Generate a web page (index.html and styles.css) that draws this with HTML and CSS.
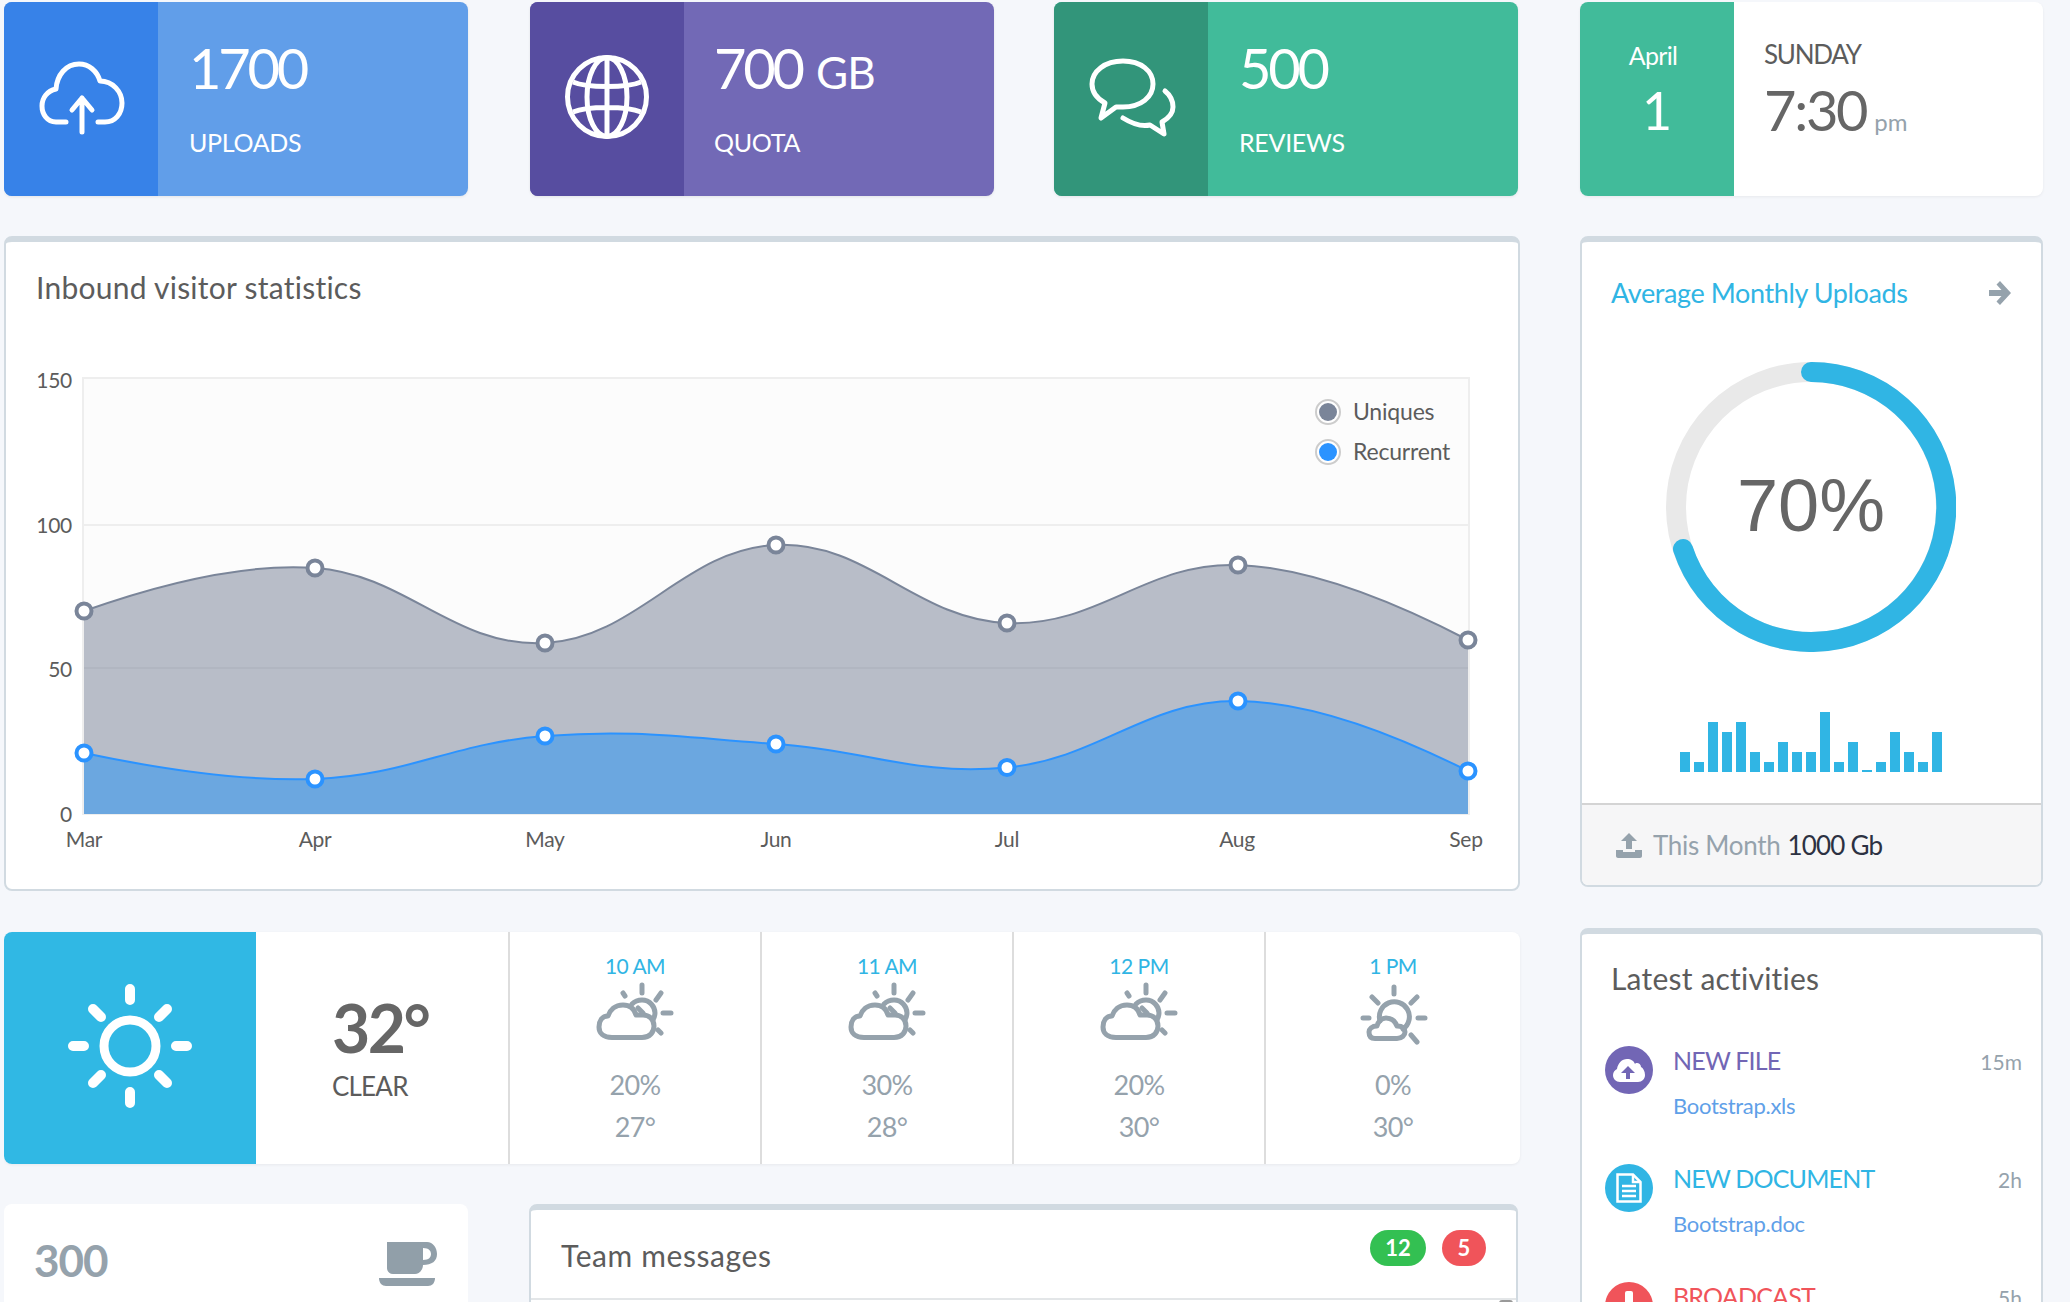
FILE: index.html
```html
<!DOCTYPE html>
<html lang="en">
<head>
  <meta charset="UTF-8">
  <title>Dashboard</title>
  <link rel="stylesheet" href="styles.css">
</head>
<body>
  <!-- shared weather icons -->
  <svg class="defs" width="0" height="0">
    <symbol id="partlyCloudy" viewBox="0 0 90 66">
      <g fill="none" stroke="currentColor" stroke-width="5" stroke-linecap="round" stroke-linejoin="round">
        <path d="M22 57.5H52C60 57.5 64 52 64 46C64 39 59 35 53 35H46C44 28 39 25 33 25C25 25 20 30 18 36C12 36 9 41 9 47C9 53 13 57.5 22 57.5Z"/>
        <path d="M42 24C45 21 48 20 52 20C60 20 65 27 65 33C65 36 64 38 63 40"/>
        <path d="M48 28L53 33M52 5V13M71 13L66 20M73 33H81M68 50L71 53M33 13L35 16"/>
      </g>
    </symbol>
    <symbol id="mostlySunny" viewBox="-3 0 90 66">
      <g fill="none" stroke="currentColor" stroke-width="5" stroke-linecap="round" stroke-linejoin="round">
        <path d="M24 58.5H46C51 58.5 54 55 54 52C54 48 51 46 46 46C44 41 40 38 35 38C30 38 27 42 26 46C21 46 18 49 18 52C18 56 20 58.5 24 58.5Z"/>
        <path d="M29 41A15 15 0 1 1 52 49"/>
        <path d="M43 7V14M66 17L60 23M67 38H74M60 55L66 62M21 17L27 23M12 38H18"/>
      </g>
    </symbol>
  </svg>

  <div class="dash">
    <div class="main-col">
      <!-- Stat cards -->
      <div class="stat-row">
        <div class="stat stat-blue">
          <div class="stat-icon">
            <svg width="100" height="96" viewBox="0 0 100 96" fill="none" stroke="#fff" stroke-width="5" stroke-linecap="round" stroke-linejoin="round">
              <path d="M35 71H25C16 71 11 63 11 55C11 47 16 40 25 38C26 24 35 13 48 13C58 13 66 20 69 30C82 30 91 41 91 52C91 63 84 71 74 71H67"/>
              <path d="M51 47V81M41 59L51 47L61 59"/>
            </svg>
          </div>
          <div class="stat-body">
            <div class="stat-num">1700</div>
            <div class="stat-label">UPLOADS</div>
          </div>
        </div>
        <div class="stat stat-purple">
          <div class="stat-icon">
            <svg class="globe" width="90" height="90" viewBox="0 0 90 90" fill="none" stroke="#fff" stroke-width="5">
              <circle cx="45" cy="45" r="39.5"/>
              <ellipse cx="45" cy="45" rx="20" ry="39.5"/>
              <path d="M45 5V85M11 30C25 36 65 36 79 30M11 60C25 54 65 54 79 60"/>
            </svg>
          </div>
          <div class="stat-body">
            <div class="stat-num">700 <span class="stat-unit">GB</span></div>
            <div class="stat-label">QUOTA</div>
          </div>
        </div>
        <div class="stat stat-green">
          <div class="stat-icon">
            <svg width="100" height="96" viewBox="0 0 100 96" fill="none" stroke="#fff" stroke-width="5" stroke-linecap="round" stroke-linejoin="round">
              <path d="M24 52C15 47 11 40 11 33C11 20 24 10 42 10C60 10 72 20 72 33C72 46 60 56 42 56H35L20 67Z"/>
              <path d="M84 40C89 44 92 50 92 56C92 62 88 67 81 71L83 83L69 74C60 76 50 72 42 67"/>
            </svg>
          </div>
          <div class="stat-body">
            <div class="stat-num">500</div>
            <div class="stat-label">REVIEWS</div>
          </div>
        </div>
      </div>

      <!-- Visitor chart -->
      <div class="panel chart-panel">
        <h2 class="panel-title chart-title">Inbound visitor statistics</h2>
        <svg class="chart" width="1512" height="540" viewBox="6 340 1512 540">
          <rect x="83" y="378" width="1386" height="436" fill="#fcfcfc"/>
          <path d="M83 378H1469V814H83ZM83 525H1469M83 668H1469" fill="none" stroke="#eeeeee" stroke-width="2"/>
          <path class="area-uniques" d="M84 611Q223 561.6 315 568C407 574.4 453 647.6 545 643C637 638.4 684 549 776 545C868 541 915 619 1007 623C1099 627 1146 561.6 1238 565Q1330 568.4 1468 640V814H84Z"/>
          <path class="area-recurrent" d="M84 753Q223 782.4 315 779C407 775.6 453 743 545 736C637 729 684 737.7 776 744C868 750.3 915 776.1 1007 767.5C1099 758.9 1146 700.3 1238 701Q1330 701.7 1468 771V814H84Z"/>
          <path class="line-uniques" d="M84 611Q223 561.6 315 568C407 574.4 453 647.6 545 643C637 638.4 684 549 776 545C868 541 915 619 1007 623C1099 627 1146 561.6 1238 565Q1330 568.4 1468 640"/>
          <path class="line-recurrent" d="M84 753Q223 782.4 315 779C407 775.6 453 743 545 736C637 729 684 737.7 776 744C868 750.3 915 776.1 1007 767.5C1099 758.9 1146 700.3 1238 701Q1330 701.7 1468 771"/>
          <g class="dots-uniques">
            <circle cx="84" cy="611" r="7.500"/><circle cx="315" cy="568" r="7.500"/><circle cx="545" cy="643" r="7.500"/><circle cx="776" cy="545" r="7.500"/><circle cx="1007" cy="623" r="7.500"/><circle cx="1238" cy="565" r="7.500"/><circle cx="1468" cy="640" r="7.500"/>
          </g>
          <g class="dots-recurrent">
            <circle cx="84" cy="753" r="7.500"/><circle cx="315" cy="779" r="7.500"/><circle cx="545" cy="736" r="7.500"/><circle cx="776" cy="744" r="7.500"/><circle cx="1007" cy="767.5" r="7.500"/><circle cx="1238" cy="701" r="7.500"/><circle cx="1468" cy="771" r="7.500"/>
          </g>
          <g class="axis axis-y">
            <text x="72" y="388">150</text><text x="72" y="533">100</text><text x="72" y="677">50</text><text x="72" y="822">0</text>
          </g>
          <g class="axis axis-x">
            <text x="84" y="847">Mar</text><text x="315" y="847">Apr</text><text x="545" y="847">May</text><text x="776" y="847">Jun</text><text x="1007" y="847">Jul</text><text x="1237" y="847">Aug</text><text x="1466" y="847">Sep</text>
          </g>
          <circle cx="1328" cy="412" r="12" fill="#fff" stroke="#cccccc" stroke-width="2"/>
          <circle cx="1328" cy="412" r="9" fill="#7a8599"/>
          <circle cx="1328" cy="452" r="12" fill="#fff" stroke="#cccccc" stroke-width="2"/>
          <circle cx="1328" cy="452" r="9" fill="#2b93ff"/>
          <text class="legend" x="1353" y="420">Uniques</text>
          <text class="legend" x="1353" y="460">Recurrent</text>
        </svg>
      </div>

      <!-- Weather strip -->
      <div class="weather">
        <div class="weather-sun">
          <svg class="sun" width="130" height="130" viewBox="-65 -65 130 130" fill="none" stroke="#fff" stroke-linecap="round">
            <circle r="26" stroke-width="9"/>
            <path stroke-width="10" d="M0 -57V-46M0 57V46M-57 0H-46M57 0H46M-37 -37L-29 -29M37 -37L29 -29M-37 37L-29 29M37 37L29 29"/>
          </svg>
        </div>
        <div class="weather-now">
          <div class="temp-big">32°</div>
          <div class="temp-word">CLEAR</div>
        </div>
        <div class="hour">
          <div class="hour-time">10 AM</div>
          <svg class="hour-icon"><use href="#partlyCloudy"/></svg>
          <div class="hour-val">20%</div>
          <div class="hour-val">27°</div>
        </div>
        <div class="hour">
          <div class="hour-time">11 AM</div>
          <svg class="hour-icon"><use href="#partlyCloudy"/></svg>
          <div class="hour-val">30%</div>
          <div class="hour-val">28°</div>
        </div>
        <div class="hour">
          <div class="hour-time">12 PM</div>
          <svg class="hour-icon"><use href="#partlyCloudy"/></svg>
          <div class="hour-val">20%</div>
          <div class="hour-val">30°</div>
        </div>
        <div class="hour">
          <div class="hour-time">1 PM</div>
          <svg class="hour-icon"><use href="#mostlySunny"/></svg>
          <div class="hour-val">0%</div>
          <div class="hour-val">30°</div>
        </div>
      </div>

      <!-- Bottom row -->
      <div class="bottom-row">
        <div class="small-card">
          <div class="small-num">300</div>
          <svg width="58" height="44" viewBox="0 0 58 44" fill="#919fa9">
            <path d="M8 0H48C54 0 58 6 58 12C58 19 53 23 44 23C44 28 40 32 36 32H14C10 32 8 29 8 26ZM44 6V18C50 18 52 15 52 12C52 9 50 6 44 6Z" fill-rule="evenodd"/>
            <path d="M0 36H56C56 41 53 44 49 44H7C3 44 0 41 0 36Z"/>
          </svg>
        </div>
        <div class="panel team-panel">
          <div class="team-head">
            <h2 class="panel-title team-title">Team messages</h2>
            <div class="badges">
              <span class="badge badge-green">12</span>
              <span class="badge badge-red">5</span>
            </div>
          </div>
          <div class="team-body"><div class="thumb"></div></div>
        </div>
      </div>
    </div>

    <div class="side-col">
      <!-- Date and time -->
      <div class="time-card">
        <div class="time-date">
          <div class="time-month">April</div>
          <div class="time-day">1</div>
        </div>
        <div class="time-body">
          <div class="time-week">SUNDAY</div>
          <div class="time-clock">
            <span>7:30</span>
            <span class="time-ampm">pm</span>
          </div>
        </div>
      </div>

      <!-- Uploads gauge -->
      <div class="panel gauge-panel">
        <div class="gauge-head">
          <span class="gauge-title">Average Monthly Uploads</span>
          <svg width="22" height="24" viewBox="0 0 22 24" fill="#95a2ac">
            <path d="M11 0L22 12L11 24L7.500 20.500L12.500 15H0V9H12.500L7.500 3.500Z"/>
          </svg>
        </div>
        <svg class="gauge" width="290" height="290" viewBox="0 0 290 290" fill="none">
          <circle cx="145" cy="145" r="135" stroke="#e9e9e9" stroke-width="20"/>
          <path d="M145 10A135 135 0 1 1 17 187" stroke="#30b5e4" stroke-width="20" stroke-linecap="round"/>
          <text class="gauge-text" x="145" y="169">70%</text>
        </svg>
        <div class="bars">
          <i style="height:20px"></i><i style="height:10px"></i><i style="height:50px"></i><i style="height:40px"></i><i style="height:50px"></i><i style="height:20px"></i><i style="height:10px"></i><i style="height:30px"></i><i style="height:20px"></i><i style="height:20px"></i><i style="height:60px"></i><i style="height:10px"></i><i style="height:30px"></i><i style="height:2px"></i><i style="height:10px"></i><i style="height:40px"></i><i style="height:20px"></i><i style="height:10px"></i><i style="height:40px"></i>
        </div>
        <div class="gauge-foot">
          <svg width="26" height="25" viewBox="0 0 26 25" fill="#95a2ac">
            <path d="M13 0L21 8H16V16H10V8H5ZM0 17H7V19H19V17H26V23C26 24 25 25 24 25H2C1 25 0 24 0 23Z"/>
          </svg>
          <span class="foot-label">This Month</span>
          <span class="foot-value">1000 Gb</span>
        </div>
      </div>

      <!-- Activity list -->
      <div class="panel activity-panel">
        <h2 class="panel-title activity-title">Latest activities</h2>
        <div class="activity">
          <div class="activity-icon bg-purple">
            <svg width="32" height="24" viewBox="0 0 32 24" fill="#fff">
              <path fill-rule="evenodd" d="M7 24C3 24 0 21 0 17C0 14 2 12 4 11C5 5 9 1 14 1C18 1 21 3 22 6C23 4 28 5 28 9C30 10 32 13 32 17C32 21 29 24 25 24ZM15 8L8 15H13V21H17V15H22Z"/>
            </svg>
          </div>
          <div class="activity-text">
            <div class="activity-name text-purple">NEW FILE</div>
            <div class="activity-file">Bootstrap.xls</div>
          </div>
          <div class="activity-time">15m</div>
        </div>
        <div class="activity">
          <div class="activity-icon bg-cyan">
            <svg width="26" height="30" viewBox="0 0 26 30" fill="none" stroke="#fff" stroke-width="2.500">
              <path d="M1.500 1.500H17L24.500 9V28.500H1.500Z"/>
              <path d="M17 1.500V9H24.500M6 13H20M6 18H20M6 23H20"/>
            </svg>
          </div>
          <div class="activity-text">
            <div class="activity-name text-cyan">NEW DOCUMENT</div>
            <div class="activity-file">Bootstrap.doc</div>
          </div>
          <div class="activity-time">2h</div>
        </div>
        <div class="activity">
          <div class="activity-icon bg-red">
            <svg width="8" height="30" viewBox="0 0 8 30" fill="#fff">
              <rect width="8" height="20" rx="2"/>
              <rect y="23" width="8" height="7" rx="2"/>
            </svg>
          </div>
          <div class="activity-text">
            <div class="activity-name text-red">BROADCAST</div>
          </div>
          <div class="activity-time">5h</div>
        </div>
      </div>
    </div>
  </div>
</body>
</html>
```

FILE: styles.css
```css
/* Global */
html, body {
  height: 1302px;
  overflow: hidden;
}
body {
  margin: 0;
  padding: 2px 0 0 4px;
  box-sizing: border-box;
  background: #f5f7fb;
  font-family: "Lato", "Open Sans", sans-serif;
  color: #5c5c5c;
}
.defs {
  display: block;
  height: 0;
}
.dash {
  display: flex;
  gap: 60px;
  align-items: flex-start;
  height: 1300px;
  overflow: hidden;
}
.main-col {
  width: 1516px;
}
.side-col {
  width: 463px;
}

/* Panels with the grey top edge */
.panel {
  background: #fff;
  box-sizing: border-box;
  border: 2px solid #d1dae1;
  border-top-width: 6px;
  border-radius: 8px;
}
.panel-title {
  margin: 0;
  font-size: 30px;
  line-height: 32px;
  font-weight: 400;
  color: #5c5c5c;
  letter-spacing: 0.250px;
}

/* Stat cards */
.stat-row {
  display: flex;
  gap: 61px;
}
.stat {
  width: 464px;
  height: 194px;
  display: flex;
  border-radius: 8px;
  overflow: hidden;
  color: #fff;
  box-shadow: 0 1px 3px rgba(0,0,0,0.08);
}
.stat-icon {
  width: 154px;
  display: flex;
  align-items: center;
  justify-content: center;
}
.globe {
  margin-bottom: 4px;
}
.stat-body {
  flex: 1;
  padding: 31px 0 0 31px;
}
.stat-num {
  font-size: 56px;
  line-height: 70px;
  letter-spacing: -3.200px;
}
.stat-unit {
  font-size: 44px;
  line-height: 1;
  letter-spacing: -1px;
  margin-left: 3px;
}
.stat-label {
  margin-top: 22px;
  font-size: 25px;
  line-height: 34px;
  letter-spacing: -0.300px;
}
.stat-blue { background: #619ee9; }
.stat-blue .stat-icon { background: #3782e8; }
.stat-purple { background: #7269b6; margin: 0 -1px 0 1px; }
.stat-purple .stat-icon { background: #574da0; }
.stat-purple .stat-body { padding-left: 30px; }
.stat-green { background: #41bb9a; }
.stat-green .stat-icon { background: #32957a; }

/* Chart */
.chart-panel {
  height: 655px;
  margin-top: 40px;
}
.chart-title {
  height: 98px;
  box-sizing: border-box;
  padding: 29px 0 0 30px;
}
.chart {
  display: block;
}
.area-uniques { fill: #7a8599; fill-opacity: 0.53; }
.area-recurrent { fill: #6ba7e0; }
.line-uniques { fill: none; stroke: #7a8599; stroke-width: 2; }
.line-recurrent { fill: none; stroke: #2b93ff; stroke-width: 2; }
.dots-uniques circle { fill: #fff; stroke: #7a8599; stroke-width: 4; }
.dots-recurrent circle { fill: #fff; stroke: #2b93ff; stroke-width: 4; }
.axis text {
  font-size: 21px;
  fill: #5c5c5c;
  letter-spacing: -0.300px;
}
.axis-y text { text-anchor: end; }
.axis-x text { text-anchor: middle; }
.legend {
  font-size: 23px;
  fill: #5c5c5c;
  letter-spacing: -0.200px;
}

/* Weather */
.weather {
  display: flex;
  height: 232px;
  margin-top: 41px;
  background: #fff;
  border-radius: 8px;
  overflow: hidden;
  box-shadow: 0 1px 3px rgba(0,0,0,0.06);
}
.weather-sun {
  width: 252px;
  background: #30b8e4;
  display: flex;
  align-items: center;
  justify-content: center;
}
.sun {
  margin-bottom: 4px;
}
.weather-now {
  width: 254px;
  box-sizing: border-box;
  padding: 61px 0 0 76px;
  border-right: 2px solid #dddddd;
}
.temp-big {
  font-size: 66px;
  line-height: 70px;
  font-weight: 700;
  color: #666;
  letter-spacing: -2.500px;
}
.temp-word {
  margin-top: 6px;
  font-size: 26px;
  line-height: 34px;
  letter-spacing: -0.800px;
}
.hour {
  flex: 0 0 252px;
  box-sizing: border-box;
  padding-top: 19px;
  text-align: center;
  border-right: 2px solid #dddddd;
  color: #95a2ac;
}
.hour:last-child {
  flex: 1;
  border-right: 0;
}
.hour-time {
  font-size: 21px;
  line-height: 29px;
  color: #30b5e4;
  letter-spacing: -0.500px;
}
.hour-icon {
  display: block;
  width: 90px;
  height: 66px;
  margin: 0 auto 18px;
  color: #95a2ac;
}
.hour-val {
  font-size: 27px;
  line-height: 42px;
  letter-spacing: -0.600px;
}

/* Bottom row */
.bottom-row {
  display: flex;
  gap: 61px;
  margin-top: 40px;
}
.small-card {
  width: 464px;
  height: 120px;
  box-sizing: border-box;
  padding: 38px 31px 0 30px;
  display: flex;
  justify-content: space-between;
  align-items: flex-start;
  background: #fff;
  border-radius: 8px;
}
.small-num {
  margin-top: -4px;
  font-size: 44px;
  line-height: 44px;
  font-weight: 700;
  color: #95a2ac;
  letter-spacing: -1px;
}
.team-panel {
  width: 989px;
  height: 120px;
}
.team-head {
  height: 88px;
  box-sizing: border-box;
  padding: 0 30px;
  display: flex;
  justify-content: space-between;
  align-items: center;
}
.team-title {
  padding-top: 2px;
  letter-spacing: 0.600px;
}
.badges {
  display: flex;
  gap: 16px;
  margin-top: -12px;
}
.badge {
  height: 36px;
  min-width: 44px;
  padding: 0 6px;
  box-sizing: border-box;
  border-radius: 18px;
  font-size: 22px;
  font-weight: 700;
  line-height: 36px;
  text-align: center;
  color: #fff;
}
.badge-green { background: #33c052; min-width: 56px; }
.badge-red { background: #f0545a; }
.team-body {
  display: flex;
  justify-content: flex-end;
  padding-right: 3px;
  border-top: 2px solid #e3e6e8;
}
.thumb {
  width: 14px;
  height: 40px;
  border-radius: 3px;
  background: #999;
}

/* Date and time card */
.time-card {
  height: 194px;
  display: flex;
  background: #fff;
  border-radius: 8px;
  overflow: hidden;
  box-shadow: 0 1px 3px rgba(0,0,0,0.06);
}
.time-date {
  width: 154px;
  padding-top: 38px;
  box-sizing: border-box;
  background: #41bb9a;
  color: #fff;
  text-align: center;
}
.time-month {
  margin-left: -8px;
  font-size: 25px;
  line-height: 30px;
  letter-spacing: -0.700px;
}
.time-day {
  margin-top: 15px;
  font-size: 52px;
  line-height: 50px;
}
.time-body {
  padding: 37px 0 0 30px;
}
.time-week {
  font-size: 26px;
  line-height: 30px;
  letter-spacing: -1.300px;
}
.time-clock {
  display: flex;
  align-items: baseline;
  gap: 8px;
  margin-top: 16px;
  font-size: 56px;
  line-height: 50px;
  letter-spacing: -2.300px;
  color: #666;
}
.time-ampm {
  font-size: 24px;
  letter-spacing: 0;
  color: #95a2ac;
}

/* Gauge */
.gauge-panel {
  height: 651px;
  margin-top: 40px;
}
.gauge-head {
  height: 100px;
  box-sizing: border-box;
  padding: 28px 30px 26px 29px;
  display: flex;
  justify-content: space-between;
  align-items: center;
}
.gauge-title {
  font-size: 27px;
  line-height: 32px;
  color: #30b5e4;
  letter-spacing: -0.400px;
}
.gauge {
  display: block;
  margin: 20px 0 0 84px;
}
.gauge-text {
  font-family: "Liberation Sans", sans-serif;
  font-size: 74px;
  fill: #666;
  text-anchor: middle;
}
.bars {
  display: flex;
  justify-content: center;
  align-items: flex-end;
  gap: 4px;
  height: 60px;
  margin: 60px 2px 31px 0;
}
.bars i {
  display: block;
  width: 10px;
  background: #30b5e4;
}
.gauge-foot {
  height: 82px;
  box-sizing: border-box;
  padding: 0 0 0 34px;
  display: flex;
  align-items: center;
  border-top: 2px solid #d4d4d4;
  border-radius: 0 0 6px 6px;
  background: #f6f6f7;
  font-size: 26px;
}
.foot-label {
  margin-left: 11px;
  color: #95a2ac;
  letter-spacing: -0.300px;
}
.foot-value {
  margin-left: 7px;
  color: #2c3142;
  letter-spacing: -0.800px;
}

/* Activities */
.activity-panel {
  height: 420px;
  margin-top: 41px;
  padding: 28px 19px 0 23px;
}
.activity-title {
  margin-left: 6px;
  margin-bottom: 52px;
  letter-spacing: 0.200px;
}
.activity {
  display: flex;
  gap: 20px;
  height: 118px;
}
.activity-icon {
  width: 48px;
  height: 48px;
  border-radius: 50%;
  display: flex;
  align-items: center;
  justify-content: center;
  flex-shrink: 0;
}
.bg-purple { background: #7266b5; }
.bg-cyan { background: #30b5e4; }
.bg-red { background: #f0545a; }
.activity-text {
  flex: 1;
}
.activity-name {
  font-size: 25px;
  line-height: 28px;
  letter-spacing: -0.800px;
}
.text-purple { color: #7266b5; }
.text-cyan { color: #30b5e4; }
.text-red { color: #f0545a; }
.activity-file {
  margin-top: 17px;
  font-size: 22px;
  line-height: 30px;
  color: #5fa0e8;
  letter-spacing: -0.300px;
}
.activity-time {
  margin-top: 1px;
  font-size: 21px;
  line-height: 30px;
  color: #95a2ac;
}
```
